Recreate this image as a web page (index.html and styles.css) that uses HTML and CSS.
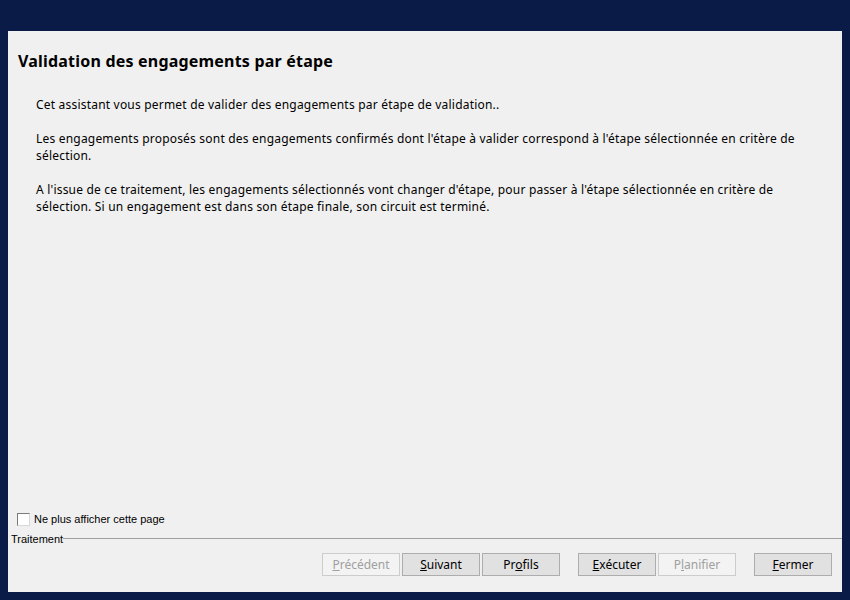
FILE: index.html
```html
<!DOCTYPE html>
<html lang="fr">
<head>
    <meta charset="UTF-8">
    <title>Validation des engagements par étape</title>
    <link rel="stylesheet" href="styles.css">
</head>
<body>
    <div class="wizard">
        <h1 class="wizard-title">Validation des engagements par étape</h1>
        <div class="wizard-text">
            <p>Cet assistant vous permet de valider des engagements par étape de validation..</p>
            <p>Les engagements proposés sont des engagements confirmés dont l'étape à valider correspond à l'étape sélectionnée en critère de sélection.</p>
            <p>A l'issue de ce traitement, les engagements sélectionnés vont changer d'étape, pour passer à l'étape sélectionnée en critère de sélection. Si un engagement est dans son étape finale, son circuit est terminé.</p>
        </div>
        <label class="skip-page">
            <span class="check-box"></span>
            Ne plus afficher cette page
        </label>
        <div class="group-title">
            <span>Traitement</span>
        </div>
        <div class="button-bar">
            <button class="win-button" disabled><u>P</u>récédent</button>
            <button class="win-button"><u>S</u>uivant</button>
            <button class="win-button">Pr<u>o</u>fils</button>
            <button class="win-button spaced"><u>E</u>xécuter</button>
            <button class="win-button" disabled>P<u>l</u>anifier</button>
            <button class="win-button spaced"><u>F</u>ermer</button>
        </div>
    </div>
</body>
</html>
```

FILE: styles.css
```css
html, body {
    margin: 0;
    height: 100%;
}
body {
    background-color: #0b1b47;
    padding: 31px 8px 8px 8px;
    box-sizing: border-box;
    font-family: "Noto Sans", "Open Sans", sans-serif;
    font-size: 12px;
    color: #000;
}
.wizard {
    background-color: #f0f0f0;
    height: 100%;
    display: flex;
    flex-direction: column;
}
.wizard-title {
    margin: 20px 0 0 10px;
    font-size: 16px;
    line-height: 20px;
    font-weight: bold;
    letter-spacing: 0.2px;
}
.wizard-text {
    flex: 1;
    padding: 25px 20px 0 28px;
    letter-spacing: 0.2px;
}
.wizard-text p {
    margin: 0 0 17px 0;
    line-height: 17px;
}
.skip-page {
    display: flex;
    align-items: center;
    margin-left: 9px;
    font-family: "Liberation Sans", Arial, sans-serif;
    font-size: 11px;
    line-height: 14px;
}
.check-box {
    width: 11px;
    height: 11px;
    border: 1px solid;
    border-color: #7a7a7a #d8d8d8 #d8d8d8 #7a7a7a;
    background-color: #fff;
    margin-right: 4px;
}
.group-title {
    display: flex;
    align-items: center;
    margin: 6px 0 0 3px;
    font-family: "Liberation Sans", Arial, sans-serif;
    font-size: 11px;
    line-height: 14px;
}
.group-title::after {
    content: "";
    flex: 1;
    border-top: 1px solid #a0a0a0;
    margin-top: -1px;
}
.button-bar {
    display: flex;
    justify-content: flex-end;
    gap: 2px;
    padding: 7px 10px 16px 0;
}
.win-button {
    width: 78px;
    height: 23px;
    font-family: inherit;
    font-size: 12px;
    color: #000;
    background-color: #e1e1e1;
    border: 1px solid #adadad;
    padding: 0;
}
.win-button:disabled {
    color: #a0a0a0;
    background-color: #f3f3f3;
    border-color: #ccc;
}
.win-button.spaced {
    margin-left: 16px;
}
```
